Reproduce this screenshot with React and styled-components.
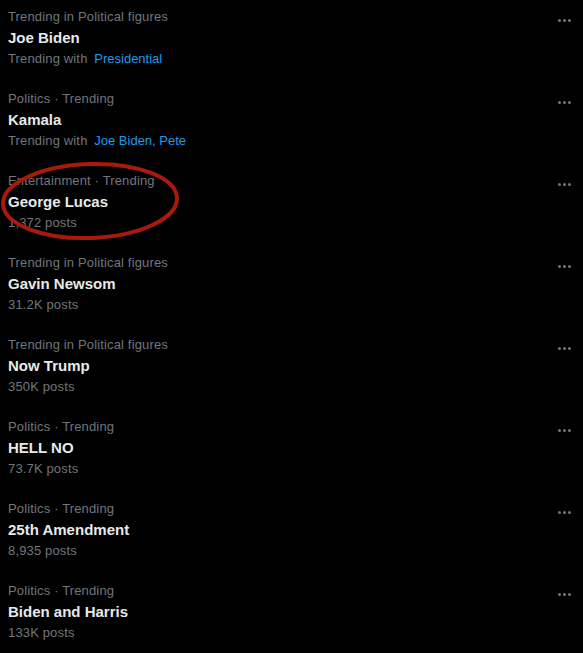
import styled, { createGlobalStyle } from "styled-components";

const Global = createGlobalStyle`
  html, body {
    margin: 0;
    padding: 0;
    background: #000;
  }
  body {
    font-family: "Liberation Sans", Arial, sans-serif;
    -webkit-font-smoothing: antialiased;
  }
`;

const List = styled.div`
  position: relative;
  width: 583px;
  background: #000;
`;

const Row = styled.div`
  display: flex;
  justify-content: space-between;
  align-items: flex-start;
  height: 82px;
  box-sizing: border-box;
  padding: 9px 12px 0 8px;
`;

const Info = styled.div`
  display: flex;
  flex-direction: column;
`;

const Category = styled.div`
  font-size: 13px;
  line-height: 16px;
  letter-spacing: 0.15px;
  color: #71767b;
`;

const Title = styled.div`
  margin-top: 3px;
  font-size: 15px;
  line-height: 20px;
  font-weight: 700;
  color: #e7e9ea;
`;

const Sub = styled.div`
  margin-top: 3px;
  font-size: 13px;
  line-height: 16px;
  letter-spacing: 0.15px;
  color: #71767b;
`;

const Related = styled.span`
  margin-left: 3px;
  letter-spacing: 0;
  color: #1d9bf0;
`;

const More = styled.div`
  display: flex;
  gap: 2px;
  margin-top: 10px;
`;

const Dot = styled.span`
  width: 3px;
  height: 3px;
  border-radius: 50%;
  background: #71767b;
`;

const Circle = styled.svg`
  position: absolute;
  left: 0;
  top: 158px;
  pointer-events: none;
`;

const trends = [
  { category: "Trending in Political figures", title: "Joe Biden", related: "Presidential" },
  { category: "Politics · Trending", title: "Kamala", related: "Joe Biden, Pete" },
  { category: "Entertainment · Trending", title: "George Lucas", posts: "1,372 posts" },
  { category: "Trending in Political figures", title: "Gavin Newsom", posts: "31.2K posts" },
  { category: "Trending in Political figures", title: "Now Trump", posts: "350K posts" },
  { category: "Politics · Trending", title: "HELL NO", posts: "73.7K posts" },
  { category: "Politics · Trending", title: "25th Amendment", posts: "8,935 posts" },
  { category: "Politics · Trending", title: "Biden and Harris", posts: "133K posts" },
];

export default function App() {
  return (
    <>
      <Global />
      <List>
        {trends.map((t) => (
          <Row key={t.title}>
            <Info>
              <Category>{t.category}</Category>
              <Title>{t.title}</Title>
              {t.related ? (
                <Sub>
                  Trending with <Related>{t.related}</Related>
                </Sub>
              ) : (
                <Sub>{t.posts}</Sub>
              )}
            </Info>
            <More>
              <Dot />
              <Dot />
              <Dot />
            </More>
          </Row>
        ))}
        <Circle width="190" height="90" viewBox="0 0 190 90">
          <ellipse
            cx="90"
            cy="43"
            rx="87"
            ry="37"
            transform="rotate(-2 90 43)"
            fill="none"
            stroke="#a81a0c"
            strokeWidth="4"
          />
        </Circle>
      </List>
    </>
  );
}
